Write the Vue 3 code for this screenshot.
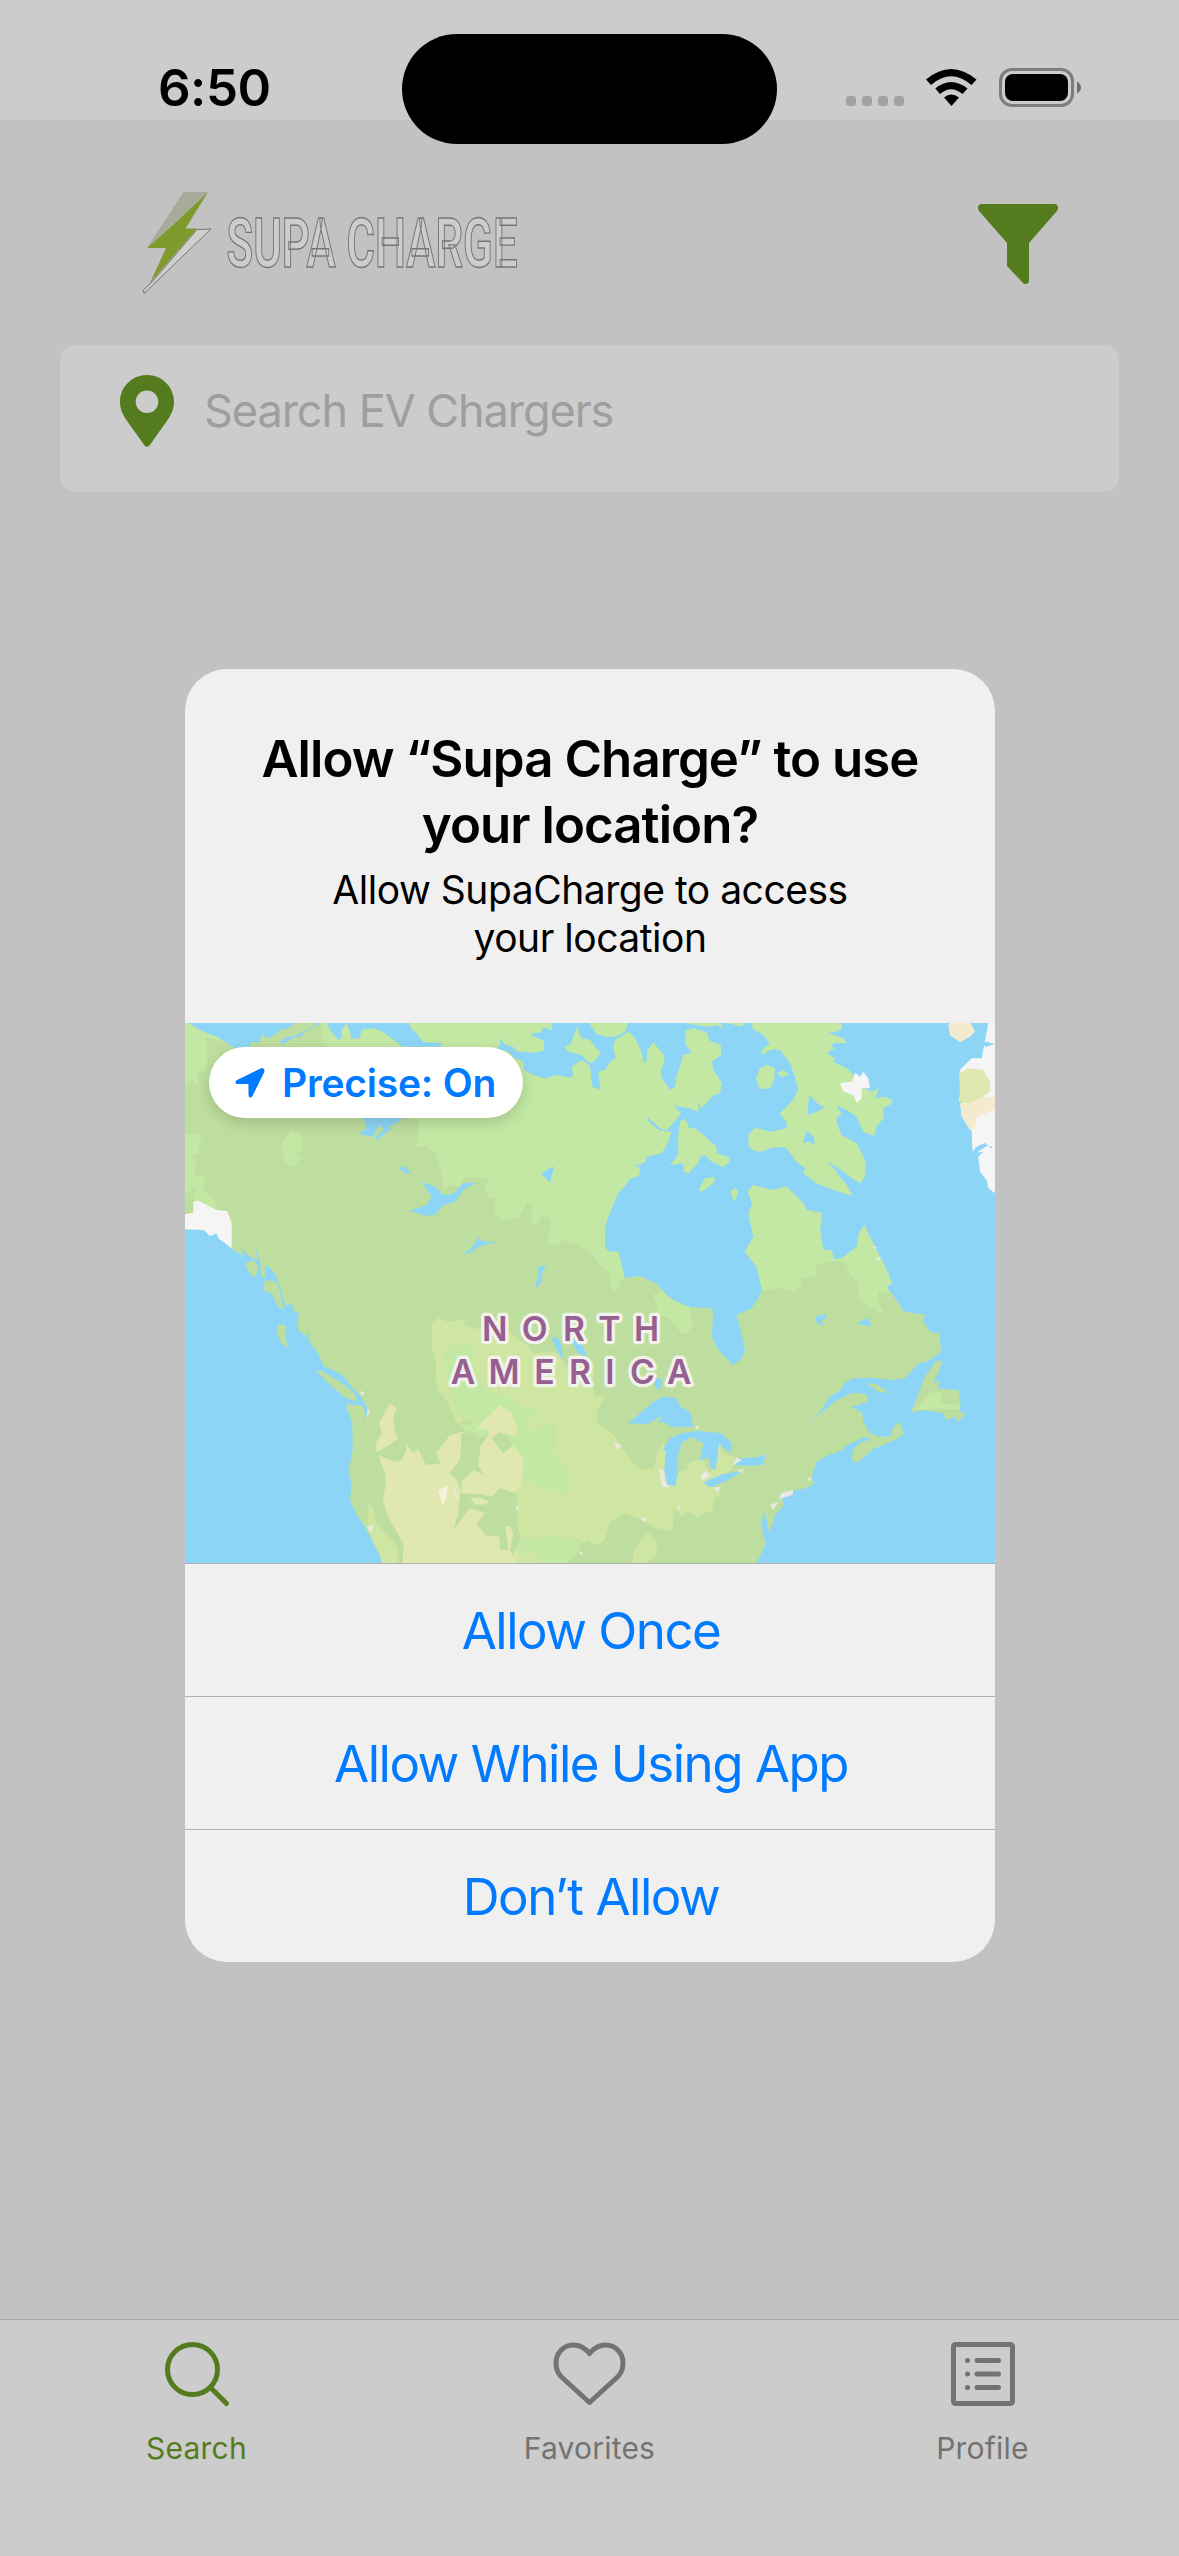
<script setup>
const actions = ['Allow Once', 'Allow While Using App', 'Don’t Allow']

const mainland = `M15,9 L30,12 50,25 80,40 110,50 150,75 165,84 210,80 212,66 235,68 250,40 258,55 285,45 300,30 330,22 345,9
 L408,9 395,22 370,35 345,48 320,50 300,66 305,75 340,52 360,52 372,38 400,20 425,9 L440,9 450,30 475,61 486,50 484,30 500,11 510,35 514,58 540,54 545,30 580,25 610,37 640,60 668,80
 785,80 785,68 730,66 710,40 690,20 690,9 L1115,9 1115,30 1090,22 1080,38 1052,40 1062,50 1093,62 1090,92 1060,98 1010,94 1000,80 975,74 960,55 960,75 950,85
 985,95 1000,112 1030,125 1032,150 1060,165 1095,176 1130,165 1170,173 1180,165 1175,140 1205,120 1228,135 1230,145 1237,200 1262,210 1258,180 1255,155 1275,150 1290,125 1308,115 1300,85 1305,60 1345,35
 1365,55 1385,95 1390,130 1400,125 1402,90 1420,68 1452,105 1453,130 1441,150 1445,175 1470,210 1485,200 1490,170 1510,105 1535,98 1515,70 1517,32 1540,25 1580,37 1588,62 1622,75 1623,105 1595,125 1600,150 1625,190 1620,220 1600,225 1565,265 1555,245 1555,275 1530,265 1500,260 1482,257 1502,280
 1490,297 1460,330 1440,325 1405,293 1400,300 1435,330 1474,337 1465,365 1445,400 1400,410 1397,425 1375,435 1355,430 1380,445 1378,465 1345,480 1340,492 1315,520 1290,575 1275,620 1275,685 1290,695 1315,695 1335,775 1380,768 1430,790 1460,825 1480,840 1525,861 1595,865 1600,880 1595,950 1615,990 1660,1036 1685,1015 1695,990 1682,930 1670,885
 1715,865 1735,835 1746,810 1730,740 1695,695 1720,650 1705,580 1717,550 1703,515 1720,495 1775,510 1820,500 1870,550 1880,570 1927,580 1920,630 1930,690 1955,690 1962,720 1990,712 2030,680 2035,645 2052,615 2080,670 2095,700 2125,760 2135,790 2120,800 2130,815 2165,862 2172,875 2205,880 2235,885 2230,905 2250,935 2278,940 2283,997
 2240,1025 2215,1030 2175,1075 2130,1080 2075,1073 2020,1075 1995,1087 1980,1110 1950,1130 1920,1175 1890,1208 1920,1182 1970,1140 2020,1118 2060,1123 2062,1145 2012,1162 2045,1175 2050,1205 2070,1240 2100,1250 2132,1248 2140,1220 2160,1205 2172,1243 2140,1262 2080,1287 2030,1330 2015,1315 2018,1290 2045,1265 2075,1260 2055,1250 1995,1278 1990,1290
 1945,1305 1910,1325 1895,1370 1902,1393 1870,1407 1830,1412 1805,1440 1805,1462 1785,1482 1780,1510 1765,1535 1758,1490 1752,1475 1745,1510 1750,1550 1758,1565 1745,1600 1728,1629 L605,1629 600,1605 570,1550 555,1520 530,1485 510,1440 515,1390 505,1355 518,1290 517,1210 500,1160 500,1152 550,1158 560,1195 562,1165 545,1130
 515,1100 490,1068 470,1055 430,1038 415,1000 385,960 385,935 375,948 355,930 352,905 358,875 345,880 335,850 318,858 303,808 285,760 260,735 252,745 235,712 222,672 232,720 210,710 180,683 195,710 160,690 155,685 115,655 110,640 90,648 72,630 15,628 Z`
</script>

<template>
  <main class="screen">
    <header class="status">
      <time class="clock">6:50</time>
      <div class="island"></div>
      <svg class="status-icons" width="240" height="50" viewBox="842 62 240 50">
        <g fill="#a3a3a3">
          <rect x="846" y="96" width="10" height="10" rx="3" />
          <rect x="862" y="96" width="10" height="10" rx="3" />
          <rect x="878" y="96" width="10" height="10" rx="3" />
          <rect x="894" y="96" width="10" height="10" rx="3" />
        </g>
        <path d="M926 79.500Q951 58.500 976.500 79.500L971.500 85Q951 67.500 931 85Z" />
        <path d="M935.300 88.500Q951 75.500 967.500 88.500L962.500 94Q951 84.500 940 94Z" />
        <path d="M944 97.500Q951 91.500 959 97.500L951.500 106Z" />
        <rect x="1000.500" y="69.500" width="72" height="36" rx="11.500" fill="none" stroke="#7e7e7e" stroke-width="3" />
        <rect x="1005" y="74" width="63" height="27" rx="8" />
        <path d="M1077 81.500Q1081 84 1081 87.500T1077 93.500Z" fill="#6f6f6f" />
      </svg>
    </header>

    <section class="brand-row">
      <svg class="logo" width="400" height="110" viewBox="140 188 400 110">
        <path d="M183.500 192H208L147 248Z" fill="#a8ab9c" />
        <path d="M208 192 185.500 228.500H197L150 283 166 248H147L176 222Z" fill="#7f9a2c" />
        <path d="M197 229.500 211 229 144 293.500 143.500 290 152 282Z" fill="#cfcfcf" stroke="#747474" stroke-width="1" />
        <text x="226.500" y="266.500" textLength="291" lengthAdjust="spacingAndGlyphs">SUPA CHARGE</text>
      </svg>
      <svg class="filter" width="80" height="80" viewBox="0 0 80 80">
        <path d="M4 0H76Q80 0 80 4Q80 6 78.500 7.500L51 39V76Q51 80 47.500 80Q46 80 44.500 78.500L29 62V39L1.500 7.500Q0 6 0 4Q0 0 4 0Z" />
      </svg>
    </section>

    <section class="search">
      <svg width="54" height="72" viewBox="0 0 54 72">
        <path fill-rule="evenodd" d="M27 0C42 0 54 12 54 27C54 34 51.500 38.500 49 43L29.500 70.500Q27 73 24.500 70.500L5 43C2.500 38.500 0 34 0 27C0 12 12 0 27 0ZM27 15.500A11.300 11.300 0 1 0 27 38.100A11.300 11.300 0 1 0 27 15.500Z" />
      </svg>
      <span>Search EV Chargers</span>
    </section>

    <section class="dialog">
      <div class="copy">
        <h1>Allow “Supa Charge” to use<br />your location?</h1>
        <p>Allow SupaCharge to access<br />your location</p>
      </div>

      <div class="map">
        <svg width="810" height="540" viewBox="15 9 2430 1620">
          <defs><clipPath id="mainland"><path :d="mainland" /></clipPath></defs>
          <rect x="15" y="9" width="2430" height="1620" fill="#8dd5f7" />
          <path :d="mainland" fill="#bdde9e" />
          <g clip-path="url(#mainland)">
            <g fill="#c2e8a3">
              <path d="M15,9H180V85L120,62 80,50 82,150 50,160 62,205 40,180 15,195ZM15,340 45,340 65,350 55,385 65,400 30,405 48,420 45,465 75,470 70,510 100,535 110,565 65,570 40,540 45,500 15,525Z" />
              <path d="M425,9H1700V770H1335L1320,785V800L1305,815 1290,800V760L1260,735 1230,695 1190,675 1145,660 1140,675 1095,672 1110,635 1110,592 1085,590 1075,610 1055,615V550L1040,550 1020,590 965,605 945,580V530L925,535 915,500 930,460 920,478 855,470 840,500 815,495 790,510 785,460 765,400 740,375 705,385 715,350V280L690,290V80H440L425,65Z" />
              <path d="M1700,480H2170V860L2130,820 2095,815V845L2115,885 2060,855 2035,840V790L2010,765 1995,725 1970,722 1910,735 1905,770 1865,775 1865,800 1840,815 1800,805 1740,812 1690,780Z" />
              <path d="M1418,825 1450,810 1525,860 1540,910 1520,945 1500,935 1470,895 1420,880 1435,860ZM303,370 335,332 368,345V390L345,405 362,415 340,442 315,430Z" />
            </g>
            <path fill="#cfe6a3" d="M755,910 775,892 800,905 850,900 855,918 950,940 985,935 1040,975 1060,1000 1120,995 1150,1010 1240,1030V1100L1245,1130 1275,1130 1250,1170V1210L1300,1245 1315,1265 1360,1330 1375,1348 1420,1348 1435,1290 1450,1270 1480,1300 1570,1320 1590,1360 1620,1265 1630,1300 1665,1310 1655,1350 1580,1390 1625,1420 1600,1440 1600,1470 1550,1490 1525,1475 1505,1490 1480,1460 1478,1535 1430,1525 1390,1500 1330,1480 1290,1505 1275,1560 1245,1575 1230,1570 1140,1590 1100,1629H1000V1400L1010,1350 1000,1250 830,1208 800,1140 770,1110 768,1030 755,980ZM567,1447 580,1470 590,1510 645,1570 655,1600 655,1629H600L575,1550 562,1500Z M1405,1535 1430,1560V1600L1400,1629H1360V1590Z" />
            <path fill="#c2e8a3" d="M790,1000 820,975 870,970 890,985 880,1025 920,1120 990,1130 1005,1155 1075,1170 1080,1215 1130,1210 1125,1300 1145,1330 1180,1380 1160,1418 1080,1400 1020,1370 1025,1310 960,1225 880,1260 840,1215 865,1190 820,1170ZM1020,1560 1100,1550 1200,1555V1590L1160,1629H1080L1070,1595 1010,1600Z" />
            <path fill="#cfe6a3" d="M1055,1245 1075,1222 1128,1205 1080,1185 1040,1200Z" />
            <path fill="#e0e7af" d="M630,1150 650,1165 640,1190 645,1240 655,1255 620,1280 590,1297 587,1270 605,1240 597,1210 612,1185ZM595,1305 640,1325 665,1320 680,1290 675,1268 700,1300 715,1288 738,1335 782,1330 768,1300 810,1245 850,1235 895,1285 915,1260 930,1230 888,1225 935,1180 960,1155 990,1175 1010,1210V1250L960,1235 935,1255 970,1300 1000,1275 1032,1320 1025,1395 1010,1410V1629H668L670,1570 625,1490 608,1440 618,1390 615,1360Z" />
            <path fill="#bdde9e" d="M845,1240 895,1240 900,1290 895,1335 910,1365 880,1350 845,1385V1420L830,1380 808,1360 840,1320ZM840,1420 900,1422 935,1430 960,1405 1010,1420 1010,1450 1015,1520 1022,1550 1000,1610 990,1590 1000,1540 990,1518 975,1520 985,1590 960,1590 958,1550 915,1545 890,1510 915,1480 870,1465 850,1490 820,1530 835,1480ZM1200,1570 1230,1560V1600L1200,1595ZM1498,1252 1530,1250 1565,1280 1560,1320 1530,1325 1520,1350 1485,1355 1480,1330ZM1040,975 1060,1000 1110,990 1140,1000 1160,1045 1180,1000 1150,950Z" />
            <path fill="#e0e7af" d="M870,1435 900,1433 930,1445 910,1455 885,1452Z" />
            <path fill="#bdde9e" d="M840,1205 860,1197 880,1205 870,1215 845,1213Z" />
          </g>

          <!-- lakes and sounds -->
          <g fill="#8dd5f7">
            <path d="M550,290H670L655,305 630,318 632,328 590,360 585,352 610,330 605,315 590,325 580,350 535,342 560,325ZM657,445 670,437 693,458 680,462ZM725,485 765,500 790,525 820,522 850,490 888,488 850,510 825,545 790,555 765,585 735,587 690,572 740,555 755,530ZM850,697 870,690 897,652 910,665 950,665 915,675 895,680 865,702ZM1082,462 1122,438 1118,460 1110,488 1098,475ZM1075,740 1098,735 1085,765 1082,790 1062,808 1075,770Z" />
            <path d="M1115,955 1130,952 1142,970 1150,1020 1135,1000ZM1160,945 1180,930 1205,970 1222,1010 1195,1000Z" />
            <path d="M1345,1210 1385,1175 1420,1145 1450,1130 1490,1135 1500,1158 1530,1175 1540,1220 1475,1222 1450,1205 1430,1208 1450,1185 1400,1213ZM1423,1082 1435,1072 1447,1082 1438,1110 1425,1102Z" />
            <path d="M1448,1290 1470,1255 1505,1240 1550,1232 1625,1240 1655,1270 1655,1298 1630,1285 1617,1268 1612,1315 1605,1350 1592,1345 1590,1320 1580,1312 1560,1325 1570,1270 1535,1250 1505,1270 1490,1320 1494,1360 1485,1397 1462,1395 1453,1350 1458,1290Z" />
            <path d="M1568,1388 1620,1365 1690,1352 1640,1382 1590,1402ZM1665,1335 1680,1315 1735,1312 1757,1302 1750,1335 1700,1337ZM1905,890 1940,882 1937,898 1925,900 1930,917 1912,912ZM2032,910 2062,893 2077,918 2045,915Z" />
          </g>

          <!-- arctic islands -->
          <g fill="#c2e8a3">
            <path d="M1190,22 1205,55 1230,60 1245,80 1262,100 1242,125 1230,130 1205,105 1165,96 1153,80 1172,72Z" />
            <path d="M1228,9H1345L1335,35 1305,50 1275,50 1250,42Z M1515,9H1620L1632,28 1610,15 1580,20Z M1640,9H1692L1688,20Z" />
            <path d="M1716,9H1985L1987,25 1970,35 1943,38 1990,55 2000,70 1965,68 1950,75 1965,85 1940,100 1965,115 1960,125 2000,145 2020,165 2040,200 2075,215 2097,205 2085,235 2115,230 2137,240 2135,252 2110,265 2110,295 2090,320 2082,348 2050,335 2030,290 2000,270 1970,255 1985,285 1970,290 1970,310 1985,345 2030,370 2045,400 2058,430 2055,470 2040,490 2010,470 1975,445 1970,460 2000,495 2018,528 1960,510 1910,490 1870,460 1875,445 1850,425 1820,385 1800,380 1770,385 1740,396 1715,390 1705,375V345L1725,323 1770,335 1820,325 1820,308 1800,280 1835,245 1855,210 1845,170 1835,145 1830,130 1800,90 1775,88 1745,105V90L1770,70 1750,45 1718,28Z" />
            <path d="M1728,175 1740,145 1760,135 1785,145 1783,180 1770,205 1738,207ZM1792,160 1810,150 1828,165 1805,172ZM1500,305 1515,295 1528,325 1545,325 1570,345 1610,380 1610,400 1645,410 1650,425 1630,442 1595,425 1575,405 1560,412 1555,430 1525,460 1510,455 1510,430 1470,435 1495,405 1493,360ZM1555,510 1575,475 1606,472 1600,490 1565,515ZM1650,515 1665,503 1675,515 1663,545Z" />
          </g>
          <path fill="#8dd5f7" d="M1883,285 1887,225 1912,250 1935,262 1910,275ZM1868,370 1880,330 1900,350 1905,375 1885,365ZM1940,425 1970,440 1998,480 2010,500 1975,460Z" />

          <!-- pacific and atlantic islands -->
          <g fill="#bdde9e">
            <path d="M195,730 220,720 237,745 225,772 205,755ZM238,715 255,745 258,775 245,770ZM255,780 290,785 298,810 312,870 295,860 275,820 250,812ZM295,915 318,915 315,945 320,970 330,988 305,970 290,940ZM408,1052 430,1055 480,1085 520,1115 535,1145 495,1133 445,1090Z" />
            <path d="M2267,1023 2288,1022 2278,1050 2260,1090 2278,1082 2275,1105 2335,1110 2342,1150 2335,1175 2358,1180 2335,1205 2325,1190 2300,1200 2290,1180 2230,1170 2190,1178 2200,1160 2220,1110 2235,1070ZM2060,1090 2090,1093 2128,1120 2095,1115ZM1780,1460 1810,1442 1808,1460 1785,1485Z" />
          </g>
          <path fill="#c2e8a3" d="M2245,1120 2280,1115 2285,1150 2340,1155V1170L2270,1165 2210,1170Z" />

          <!-- ice, rock and urban areas -->
          <path fill="#f5f5f5" d="M15,583 40,578 40,545 55,542 110,570 142,573 155,610 155,685 115,655 110,640 90,648 72,630 15,628ZM1980,190 2015,185 2025,158 2040,170 2050,155 2065,175 2070,205 2045,205 2045,235 2030,250 2020,225 1990,215ZM2425,9H2445V520L2425,505 2420,480 2400,455 2395,410 2410,395 2378,400 2375,335 2340,150 2360,130 2375,115 2405,115Z" />
          <path fill="#f4ebcf" d="M2305,15 2310,9H2372L2385,35 2370,50 2340,67 2310,45ZM2340,250 2400,230H2445V270L2390,290 2385,325 2370,330 2345,290Z" />
          <path fill="#e0e7af" d="M2337,160 2365,145 2410,150 2430,185 2430,215 2400,235 2370,250 2335,245 2340,215Z" />
          <path fill="#8dd5f7" d="M2400,75 2420,65 2445,72 2420,80ZM2375,398 2390,380 2415,368 2432,385 2440,380 2420,378 2398,392 2385,405Z" />
          <path fill="#f4f1df" d="M775,1410 805,1395 798,1435 788,1458Z" />
          <path fill="#ece7e0" d="M540,1112 555,1120 545,1128ZM562,1165 568,1175 562,1200ZM818,1400 830,1415 834,1440 825,1430ZM560,1520 580,1515 572,1540ZM1005,1457 1018,1462 1012,1472ZM1302,1265 1325,1278 1312,1290ZM1437,1345 1452,1352 1455,1385 1470,1403 1445,1400ZM1560,1370 1575,1352 1592,1365 1570,1382ZM1657,1338 1668,1312 1685,1320ZM1672,1350 1692,1348 1685,1360ZM1600,1402 1622,1400 1615,1418ZM1795,1438 1805,1418 1840,1410 1838,1424ZM1770,1455 1795,1445 1780,1470ZM1380,1495 1398,1492 1395,1507ZM1490,1458 1500,1455 1498,1472ZM1545,1218H1558L1550,1230ZM1882,1372 1895,1375 1888,1385ZM2073,680H2090L2085,688ZM2085,712H2102L2098,723ZM1195,1600 1205,1593 1210,1605Z" />

          <g class="continent">
            <text y="964" x="944 1064 1182 1288 1400">NORTH</text>
            <text y="1093" x="849 972 1093 1200 1290 1387 1498">AMERICA</text>
          </g>
        </svg>
        <button class="precise">
          <svg width="30" height="30" viewBox="0 0 30 30"><path d="M25.500 .5 2 12Q-.5 13.500 1 15.500Q1.500 16 3 16H12.500Q13.500 16 13.500 17V27Q13.500 29.500 15.500 29.500Q16.500 29.500 17.500 28L29 4.500Q30 1.500 28.500 .5Q27 -.3 25.500 .5Z" /></svg>
          <span>Precise: On</span>
        </button>
      </div>

      <button v-for="label in actions" :key="label" class="action">{{ label }}</button>
    </section>

    <nav class="tabs">
      <a class="tab active">
        <svg width="80" height="72" viewBox="0 0 80 72"><circle cx="35.500" cy="31.500" r="25" /><path d="M53.500 49.500 69.500 65.500" /></svg>
        <span>Search</span>
      </a>
      <a class="tab">
        <svg width="80" height="72" viewBox="0.500 0 80 72"><path d="M40 64.500 12 39C8 35 6.500 30 6.500 25C6.500 15 14 7 24 7C31 7 35.500 10 40 15.500C44.500 10 49 7 56 7C66 7 73.500 15 73.500 25C73.500 30 72 35 68 39Z" /></svg>
        <span>Favorites</span>
      </a>
      <a class="tab">
        <svg width="80" height="72" viewBox="0 0 80 72"><rect x="10.500" y="6.500" width="59" height="59" rx="2" /><path d="M34 22.500H55.500M34 36H55.500M34 49.500H55.500M24.500 22.500h.1M24.500 36h.1M24.500 49.500h.1" /></svg>
        <span>Profile</span>
      </a>
    </nav>
  </main>
</template>

<style>
body { margin: 0; background: #c2c2c2; }
</style>

<style scoped>
.screen {
  position: relative;
  display: flex;
  flex-direction: column;
  width: 1179px;
  height: 2556px;
  overflow: hidden;
  background: #c2c2c2;
  font-family: Inter, "Liberation Sans", sans-serif;
}
button { border: 0; margin: 0; font-family: inherit; }

.status {
  display: flex;
  flex: none;
  align-items: flex-start;
  box-sizing: border-box;
  height: 120px;
  background: #ccc;
}
.clock {
  box-sizing: border-box;
  width: 402px;
  padding: 57px 0 0 158px;
  font-size: 51px;
  font-weight: 600;
  line-height: 62px;
  letter-spacing: -0.5px;
}
.island { width: 375px; height: 110px; margin-top: 34px; border-radius: 55px; background: #000; }
.status-icons { margin: 62px 0 0 65px; }

.brand-row { display: flex; flex: none; justify-content: space-between; height: 225px; padding: 0 121px 0 140px; }
.logo { margin-top: 68px; overflow: visible; }
.logo text {
  font-family: Roboto, sans-serif;
  font-size: 68px;
  font-weight: 600;
  fill: #cdcdcd;
  stroke: #757575;
  stroke-width: 1.4px;
}
.filter { margin-top: 84px; fill: #547c1e; }

.search {
  display: flex;
  flex: none;
  box-sizing: border-box;
  height: 147px;
  margin: 0 60px;
  padding: 30px 60px;
  gap: 30px;
  border-radius: 15px;
  background: #ccc;
}
.search svg { fill: #547c1e; }
.search span { margin-top: 9px; font-size: 45px; line-height: 54px; color: #9e9e9e; letter-spacing: -1.05px; white-space: nowrap; }

.dialog {
  display: flex;
  flex: none;
  flex-direction: column;
  width: 810px;
  height: 1293px;
  margin: 177px 0 0 185px;
  overflow: hidden;
  border-radius: 42px;
  background: #f0f0f0;
  text-align: center;
}
.copy { flex: none; box-sizing: border-box; height: 354px; padding-top: 57px; white-space: nowrap; }
h1 { margin: 0; font-size: 51px; font-weight: 600; line-height: 66px; letter-spacing: -0.95px; }
p { margin: 8px 0 0; font-size: 39px; line-height: 48px; letter-spacing: -0.48px; }

.map { position: relative; flex: none; height: 540px; }
.map > svg { display: block; }
.continent text {
  font-size: 101px;
  font-weight: 600;
  text-anchor: middle;
  fill: #965e91;
  stroke: #f1f2e9;
  stroke-width: 20px;
  stroke-linejoin: round;
  paint-order: stroke;
}
.precise {
  position: absolute;
  top: 24px;
  left: 24px;
  display: flex;
  align-items: center;
  box-sizing: border-box;
  width: 314px;
  height: 71px;
  padding: 0 0 0 26px;
  gap: 17px;
  border-radius: 36px;
  background: #fff;
  box-shadow: 0 5px 14px rgba(0, 0, 0, 0.15);
  color: #007aff;
  font-size: 39px;
  font-weight: 600;
  letter-spacing: -0.2px;
  white-space: nowrap;
}
.precise svg { fill: #007aff; }

.action {
  flex: none;
  box-sizing: border-box;
  height: 133px;
  padding: 0 0 0 2px;
  border-top: 1px solid #b0b0b0;
  background: transparent;
  color: #007aff;
  font-size: 51px;
  letter-spacing: -1.5px;
}

.tabs {
  display: flex;
  flex: none;
  box-sizing: border-box;
  height: 237px;
  margin-top: auto;
  border-top: 1px solid #a9a9a9;
  background: #ccc;
}
.tab { display: flex; flex: 1; flex-direction: column; align-items: center; padding-top: 18px; color: #737373; }
.tab svg { fill: none; stroke: currentColor; stroke-width: 5px; stroke-linecap: round; stroke-linejoin: round; }
.tab span { margin-top: 20px; font-size: 30px; line-height: 36px; letter-spacing: 0.2px; }
.active { color: #547c1e; }
</style>
